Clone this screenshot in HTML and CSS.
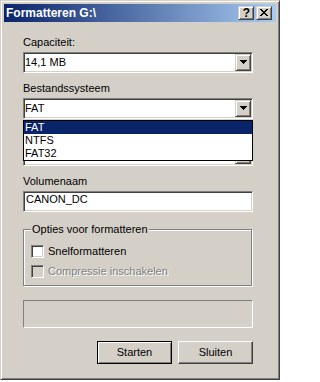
FILE: index.html
```html
<!DOCTYPE html>
<html lang="nl">
<head>
<meta charset="utf-8">
<title>Formatteren G:\</title>
<link rel="stylesheet" href="styles.css">
</head>
<body>
<div class="window">
  <div class="titlebar">
    <span class="title">Formatteren G:\</span>
    <div class="caption-buttons">
      <span class="cap-btn help">?</span>
      <span class="cap-btn close"><svg width="8" height="7" viewBox="0 0 8 7" shape-rendering="crispEdges"><path d="M0 0h2v1H0z M6 0h2v1H6z M1 1h2v1H1z M5 1h2v1H5z M2 2h4v1H2z M3 3h2v1H3z M2 4h4v1H2z M1 5h2v1H1z M5 5h2v1H5z M0 6h2v1H0z M6 6h2v1H6z" fill="#000"/></svg></span>
    </div>
  </div>
  <div class="client">
    <div class="label">Capaciteit:</div>
    <div class="combo">
      <span class="combo-text">14,1 MB</span>
      <span class="drop-btn"><svg width="7" height="4" viewBox="0 0 7 4" shape-rendering="crispEdges"><path d="M0 0h7v1H0z M1 1h5v1H1z M2 2h3v1H2z M3 3h1v1H3z" fill="#000"/></svg></span>
    </div>

    <div class="label gap9">Bestandssysteem</div>
    <div class="combo">
      <span class="combo-text">FAT</span>
      <span class="drop-btn"><svg width="7" height="4" viewBox="0 0 7 4" shape-rendering="crispEdges"><path d="M0 0h7v1H0z M1 1h5v1H1z M2 2h3v1H2z M3 3h1v1H3z" fill="#000"/></svg></span>
      <ul class="dropdown-list">
        <li class="selected">FAT</li>
        <li>NTFS</li>
        <li>FAT32</li>
      </ul>
    </div>

    <div class="label gap10">Grootte van de toewijzingseenheid</div>
    <div class="combo">
      <span class="combo-text">Standaard toewijzingsgrootte</span>
      <span class="drop-btn"><svg width="7" height="4" viewBox="0 0 7 4" shape-rendering="crispEdges"><path d="M0 0h7v1H0z M1 1h5v1H1z M2 2h3v1H2z M3 3h1v1H3z" fill="#000"/></svg></span>
    </div>

    <div class="label gap9">Volumenaam</div>
    <div class="textbox">CANON_DC</div>

    <fieldset class="group">
      <legend>Opties voor formatteren</legend>
      <div class="check-row">
        <span class="checkbox"></span>
        <span class="check-label">Snelformatteren</span>
      </div>
      <div class="check-row disabled">
        <span class="checkbox"></span>
        <span class="check-label">Compressie inschakelen</span>
      </div>
    </fieldset>

    <div class="progress"></div>

    <div class="button-row">
      <span class="btn default">Starten</span>
      <span class="btn">Sluiten</span>
    </div>
  </div>
</div>
</body>
</html>
```

FILE: styles.css
```css
* {
  box-sizing: border-box;
}

html, body {
  margin: 0;
  padding: 0;
  background: #ffffff;
}

body {
  font-family: "Liberation Sans", Arial, sans-serif;
  font-size: 11px;
  color: #000;
}

.window {
  width: 280px;
  height: 380px;
  background: #d4d0c8;
  border: 1px solid;
  border-color: #d4d0c8 #404040 #404040 #d4d0c8;
  box-shadow: inset 1px 1px 0 #ffffff, inset -1px -1px 0 #808080;
  padding: 3px;
  display: flex;
  flex-direction: column;
}

/* Title bar */
.titlebar {
  height: 18px;
  flex: none;
  display: flex;
  align-items: center;
  justify-content: space-between;
  background: linear-gradient(to right, #0a246a, #a6caf0);
  padding: 0 4px 0 2px;
}

.title {
  font-weight: bold;
  font-size: 12px;
  line-height: 18px;
  color: #fff;
  white-space: nowrap;
}

.caption-buttons {
  display: flex;
  gap: 2px;
}

.cap-btn {
  width: 16px;
  height: 14px;
  background: #d4d0c8;
  border: 1px solid;
  border-color: #d4d0c8 #404040 #404040 #d4d0c8;
  box-shadow: inset 1px 1px 0 #ffffff, inset -1px -1px 0 #808080;
  display: flex;
  justify-content: center;
}

.cap-btn.help {
  font-weight: bold;
  font-size: 12px;
  line-height: 12px;
  padding-left: 1px;
}

.cap-btn.close {
  align-items: flex-start;
}

.cap-btn.close svg {
  display: block;
  margin-top: 2px;
}

/* Client area */
.client {
  padding: 14px 23px 0 19px;
  display: flex;
  flex-direction: column;
}

.label {
  height: 13px;
  line-height: 13px;
  white-space: nowrap;
}

.label.gap9 {
  margin-top: 9px;
}

.label.gap10 {
  margin-top: 10px;
}

.combo {
  position: relative;
  margin-top: 3px;
  height: 21px;
  background: #fff;
  border: 1px solid;
  border-color: #808080 #ffffff #ffffff #808080;
  box-shadow: inset 1px 1px 0 #404040, inset -1px -1px 0 #d4d0c8;
  padding: 1px;
  display: flex;
}

.combo-text {
  flex: 1;
  line-height: 17px;
  white-space: nowrap;
  overflow: hidden;
}

.drop-btn {
  width: 16px;
  height: 17px;
  flex: none;
  background: #d4d0c8;
  border: 1px solid;
  border-color: #d4d0c8 #404040 #404040 #d4d0c8;
  box-shadow: inset 1px 1px 0 #ffffff, inset -1px -1px 0 #808080;
  padding: 5px 0 0 4px;
}

.drop-btn svg {
  display: block;
}

.dropdown-list {
  position: absolute;
  z-index: 10;
  left: -1px;
  top: 21px;
  width: 230px;
  margin: 0;
  padding: 0;
  list-style: none;
  background: #fff;
  border: 1px solid #000;
}

.dropdown-list li {
  height: 13px;
  line-height: 13px;
  padding-left: 1px;
}

.dropdown-list li.selected {
  background: #0a246a;
  color: #fff;
}

.textbox {
  margin-top: 3px;
  height: 21px;
  background: #fff;
  border: 1px solid;
  border-color: #808080 #ffffff #ffffff #808080;
  box-shadow: inset 1px 1px 0 #404040, inset -1px -1px 0 #d4d0c8;
  padding: 1px 2px;
  line-height: 13px;
  white-space: nowrap;
}

/* Group box */
.group {
  margin: 11px 0 0 0;
  padding: 9px 7px 7px 7px;
  width: 229px;
  min-width: 0;
  align-self: flex-start;
  border: 1px solid #808080;
  box-shadow: inset 1px 1px 0 #ffffff, 1px 1px 0 #ffffff;
}

.group legend {
  padding: 0 1px;
  margin: 0;
  line-height: 13px;
  background: #d4d0c8;
}

.check-row {
  display: flex;
  align-items: center;
  gap: 4px;
  height: 13px;
  line-height: 13px;
}

.check-row + .check-row {
  margin-top: 7px;
}

.checkbox {
  width: 13px;
  height: 13px;
  flex: none;
  background: #fff;
  border: 1px solid;
  border-color: #808080 #ffffff #ffffff #808080;
  box-shadow: inset 1px 1px 0 #404040, inset -1px -1px 0 #d4d0c8;
}

.check-row.disabled .checkbox {
  background: #d4d0c8;
}

.check-row.disabled .check-label {
  color: #808080;
  text-shadow: 1px 1px 0 #ffffff;
}

.check-label {
  white-space: nowrap;
}

/* Progress area */
.progress {
  margin-top: 14px;
  height: 28px;
  border: 1px solid;
  border-color: #808080 #ffffff #ffffff #808080;
}

/* Buttons */
.button-row {
  margin-top: 13px;
  display: flex;
  justify-content: flex-end;
  gap: 6px;
}

.btn {
  width: 75px;
  height: 23px;
  line-height: 21px;
  text-align: center;
  background: #d4d0c8;
  border: 1px solid;
  border-color: #ffffff #404040 #404040 #ffffff;
  box-shadow: inset -1px -1px 0 #808080;
}

.btn.default {
  border-color: #000;
  box-shadow: inset 1px 1px 0 #ffffff, inset -1px -1px 0 #808080;
}
```
